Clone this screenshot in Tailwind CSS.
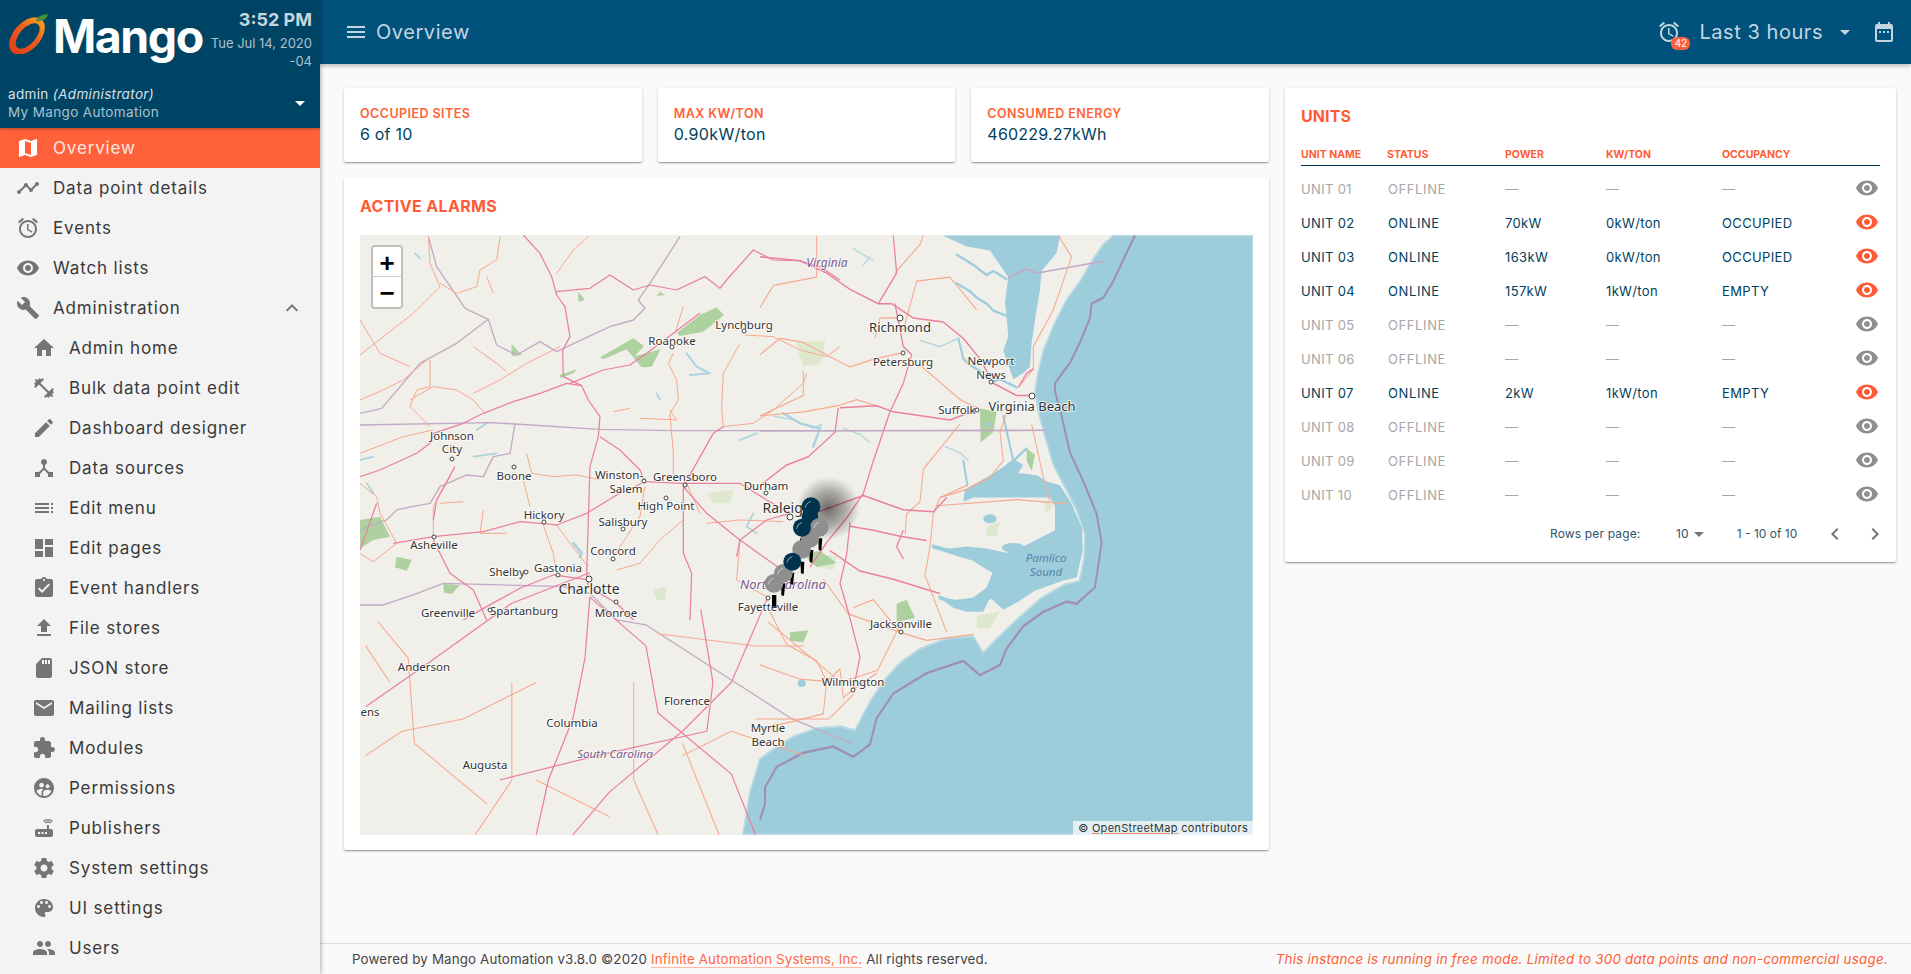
<!doctype html>
<html lang="en">
<head>
<meta charset="utf-8">
<title>Overview</title>
<script src="https://cdn.jsdelivr.net/npm/@tailwindcss/browser@4"></script>
</head>
<body class="[font-family:Inter,sans-serif] bg-[#fafafa] overflow-hidden">
<svg width="0" height="0" class="absolute">
  <defs>
    <symbol id="eye" viewBox="0 0 24 24"><path fill="currentColor" d="M12 4.5C7 4.5 2.73 7.61 1 12c1.73 4.39 6 7.5 11 7.5s9.27-3.11 11-7.5c-1.73-4.39-6-7.5-11-7.5zM12 17c-2.76 0-5-2.24-5-5s2.24-5 5-5 5 2.24 5 5-2.24 5-5 5zm0-8c-1.66 0-3 1.34-3 3s1.34 3 3 3 3-1.34 3-3-1.34-3-3-3z"/></symbol>
    <symbol id="alarm" viewBox="0 0 24 24"><path fill="currentColor" d="M22 5.72l-4.6-3.86-1.29 1.53 4.6 3.86L22 5.72zM7.88 3.39L6.6 1.86 2 5.71l1.29 1.53 4.59-3.85zM12.5 8H11v6l4.75 2.85.75-1.23-4-2.37V8zM12 4c-4.97 0-9 4.03-9 9s4.03 9 9 9 9-4.03 9-9-4.03-9-9-9zm0 16c-3.87 0-7-3.13-7-7s3.13-7 7-7 7 3.13 7 7-3.13 7-7 7z"/></symbol>
    <symbol id="drop" viewBox="0 0 24 24"><path fill="currentColor" d="M7 10l5 5 5-5z"/></symbol>
    <radialGradient id="halo"><stop offset="0" stop-color="#000" stop-opacity=".55"/><stop offset=".55" stop-color="#000" stop-opacity=".28"/><stop offset="1" stop-color="#000" stop-opacity="0"/></radialGradient>
    <linearGradient id="swirlB" x1="0" y1=".5" x2="1" y2=".5"><stop offset="0" stop-color="#e43d17"/><stop offset=".55" stop-color="#ef5a1c"/><stop offset="1" stop-color="#f9a11f"/></linearGradient>
  </defs>
</svg>
<div class="flex w-[1911px] h-[974px] overflow-hidden">
  <!-- Sidebar -->
  <aside class="w-[320px] shrink-0 h-full bg-[#f3f3f3] shadow-[1px_0_4px_rgba(0,0,0,0.3)] z-20 flex flex-col overflow-hidden">
    <header class="h-[128px] shrink-0 bg-[#004465] flex flex-col shadow-[0_1px_3px_rgba(0,0,0,0.3)] z-10">
      <div class="h-[80px] flex items-start">
        <svg class="ml-[9px] mt-[14px] w-[40px] h-[40px] shrink-0" viewBox="0 0 40 40">
          <g transform="rotate(-48 18 22)"><path fill="url(#swirlB)" fill-rule="evenodd" d="M-4 22a22 13.500 0 1 0 44 0a22 13.500 0 1 0-44 0ZM3 22.500a15.500 8 0 1 0 31 0a15.500 8 0 1 0-31 0Z"/></g>
          <path fill="#4e8f3c" d="M27 7C28 2 33 1 39 0C38 5 33 8 27 7Z"/>
        </svg>
        <span class="ml-[4px] mt-[8px] text-[46.5px] leading-[56px] font-bold text-white tracking-[-1.5px]">Mango</span>
        <div class="ml-auto pr-2 pt-[9px] text-right text-[#a9c2cf] whitespace-nowrap">
          <div class="text-[18px] leading-[22px] font-bold text-[#c5d6de]">3:52 PM</div>
          <div class="text-[13px] leading-[18px] mt-[3px]">Tue Jul 14, 2020</div>
          <div class="text-[13px] leading-[18px]">-04</div>
        </div>
      </div>
      <div class="flex items-center pl-2 pr-[8px] pt-[5px]">
        <div class="flex-1">
          <div class="text-[13.5px] leading-[18px] text-[#d5e1e7] tracking-[0.35px]">admin <em class="italic">(Administrator)</em></div>
          <div class="text-[13.5px] leading-[18px] text-[#a9c2cf] tracking-[0.35px]">My Mango Automation</div>
        </div>
        <svg class="w-6 h-6 text-white"><use href="#drop"/></svg>
      </div>
    </header>
    <nav class="text-[17px] text-[#3a3a3a] tracking-[0.85px] [&_span]:pt-[2px]">
      <a class="flex items-center h-[40px] bg-[#ff623a] text-[#fde8e0] pl-[16px]"><svg class="w-6 h-6 text-white shrink-0" viewBox="0 0 24 24"><path fill="currentColor" d="M20.5 3l-.16.03L15 5.1 9 3 3.36 4.9c-.21.07-.36.25-.36.48V20.5c0 .28.22.5.5.5l.16-.03L9 18.9l6 2.1 5.64-1.9c.21-.07.36-.25.36-.48V3.5c0-.28-.22-.5-.5-.5zM15 19l-6-2.11V5l6 2.11V19z"/></svg><span class="ml-[13px]">Overview</span></a>
      <a class="flex items-center h-[40px] pl-[16px]"><svg class="w-6 h-6 text-[#757575] shrink-0" viewBox="0 0 24 24"><path fill="currentColor" d="M23 8c0 1.100-.9 2-2 2-.18 0-.35-.02-.51-.07l-3.560 3.550c.05.16.07.34.07.52 0 1.100-.9 2-2 2s-2-.9-2-2c0-.18.02-.36.07-.52l-2.550-2.550c-.16.05-.34.07-.52.07s-.36-.02-.52-.07l-4.550 4.560c.05.16.07.33.07.51 0 1.100-.9 2-2 2s-2-.9-2-2 .9-2 2-2c.18 0 .35.02.51.07l4.560-4.550C8.020 9.360 8 9.180 8 9c0-1.100.9-2 2-2s2 .9 2 2c0 .18-.02.36-.07.52l2.550 2.550c.16-.05.34-.07.52-.07s.36.02.52.07l3.550-3.560C19.020 8.350 19 8.180 19 8c0-1.100.9-2 2-2s2 .9 2 2z"/></svg><span class="ml-[13px]">Data point details</span></a>
      <a class="flex items-center h-[40px] pl-[16px]"><svg class="w-6 h-6 text-[#757575] shrink-0"><use href="#alarm"/></svg><span class="ml-[13px]">Events</span></a>
      <a class="flex items-center h-[40px] pl-[16px]"><svg class="w-6 h-6 text-[#757575] shrink-0"><use href="#eye"/></svg><span class="ml-[13px]">Watch lists</span></a>
      <a class="flex items-center h-[40px] pl-[16px] pr-[16px]"><svg class="w-6 h-6 text-[#757575] shrink-0" viewBox="0 0 24 24"><path fill="currentColor" d="M22.700 19l-9.100-9.100c.9-2.300.4-5-1.500-6.900-2-2-5-2.400-7.400-1.300L9 6 6 9 1.600 4.700C.4 7.100.9 10.100 2.900 12.100c1.900 1.900 4.600 2.400 6.900 1.500l9.100 9.100c.4.4 1 .4 1.400 0l2.300-2.300c.5-.4.5-1.100.1-1.400z"/></svg><span class="ml-[13px] flex-1">Administration</span><svg class="w-6 h-6 text-[#757575] shrink-0" viewBox="0 0 24 24"><path fill="currentColor" d="M12 8l-6 6 1.410 1.410L12 10.830l4.590 4.580L18 14z"/></svg></a>
      <a class="flex items-center h-[40px] pl-[32px]"><svg class="w-6 h-6 text-[#757575] shrink-0" viewBox="0 0 24 24"><path fill="currentColor" d="M10 20v-6h4v6h5v-8h3L12 3 2 12h3v8z"/></svg><span class="ml-[13px]">Admin home</span></a>
      <a class="flex items-center h-[40px] pl-[32px]"><svg class="w-6 h-6 text-[#757575] shrink-0" viewBox="0 0 24 24"><path fill="currentColor" d="M20.570 14.860L22 13.430 20.570 12 17 15.570 8.430 7 12 3.430 10.570 2 9.140 3.430 7.710 2 5.570 4.140 4.140 2.710 2.710 4.140l1.430 1.430L2 7.710l1.430 1.430L2 10.570 3.430 12 7 8.430 15.570 17 12 20.570 13.430 22l1.430-1.430L16.290 22l2.140-2.140 1.430 1.430 1.430-1.430-1.430-1.430L22 16.290z"/></svg><span class="ml-[13px]">Bulk data point edit</span></a>
      <a class="flex items-center h-[40px] pl-[32px]"><svg class="w-6 h-6 text-[#757575] shrink-0" viewBox="0 0 24 24"><path fill="currentColor" d="M3 17.250V21h3.750L17.810 9.940l-3.750-3.750L3 17.250zM20.710 7.040c.39-.39.39-1.020 0-1.410l-2.340-2.340c-.39-.39-1.020-.39-1.410 0l-1.830 1.830 3.750 3.750 1.830-1.830z"/></svg><span class="ml-[13px]">Dashboard designer</span></a>
      <a class="flex items-center h-[40px] pl-[32px]"><svg class="w-6 h-6 text-[#757575] shrink-0" viewBox="0 0 24 24"><path fill="currentColor" d="M17 16l-4-4V8.820C14.160 8.400 15 7.300 15 6c0-1.660-1.340-3-3-3S9 4.340 9 6c0 1.300.84 2.400 2 2.820V12l-4 4H3v5h5v-3.050l4-4.200 4 4.200V21h5v-5h-4z"/></svg><span class="ml-[13px]">Data sources</span></a>
      <a class="flex items-center h-[40px] pl-[32px]"><svg class="w-6 h-6 text-[#757575] shrink-0" viewBox="0 0 24 24"><path fill="currentColor" d="M3 9h14V7H3v2zm0 4h14v-2H3v2zm0 4h14v-2H3v2zm16 0h2v-2h-2v2zm0-10v2h2V7h-2zm0 6h2v-2h-2v2z"/></svg><span class="ml-[13px]">Edit menu</span></a>
      <a class="flex items-center h-[40px] pl-[32px]"><svg class="w-6 h-6 text-[#757575] shrink-0" viewBox="0 0 24 24"><path fill="currentColor" d="M3 13h8V3H3v10zm0 8h8v-6H3v6zm10 0h8V11h-8v10zm0-18v6h8V3h-8z"/></svg><span class="ml-[13px]">Edit pages</span></a>
      <a class="flex items-center h-[40px] pl-[32px]"><svg class="w-6 h-6 text-[#757575] shrink-0" viewBox="0 0 24 24"><path fill="currentColor" d="M19 3h-4.180C14.400 1.840 13.300 1 12 1c-1.300 0-2.400.84-2.820 2H5c-1.100 0-2 .9-2 2v14c0 1.100.9 2 2 2h14c1.100 0 2-.9 2-2V5c0-1.100-.9-2-2-2zm-7 0c.55 0 1 .45 1 1s-.45 1-1 1-1-.45-1-1 .45-1 1-1zm-2 14l-4-4 1.410-1.410L10 14.170l6.590-6.590L18 9l-8 8z"/></svg><span class="ml-[13px]">Event handlers</span></a>
      <a class="flex items-center h-[40px] pl-[32px]"><svg class="w-6 h-6 text-[#757575] shrink-0" viewBox="0 0 24 24"><path fill="currentColor" d="M9 16h6v-6h4l-7-7-7 7h4zm-4 2h14v2H5z"/></svg><span class="ml-[13px]">File stores</span></a>
      <a class="flex items-center h-[40px] pl-[32px]"><svg class="w-6 h-6 text-[#757575] shrink-0" viewBox="0 0 24 24"><path fill="currentColor" d="M18 2h-8L4.020 8 4 20c0 1.100.9 2 2 2h12c1.100 0 2-.9 2-2V4c0-1.100-.9-2-2-2zm-6 6h-2V4h2v4zm3 0h-2V4h2v4zm3 0h-2V4h2v4z"/></svg><span class="ml-[13px]">JSON store</span></a>
      <a class="flex items-center h-[40px] pl-[32px]"><svg class="w-6 h-6 text-[#757575] shrink-0" viewBox="0 0 24 24"><path fill="currentColor" d="M20 4H4c-1.100 0-1.990.9-1.990 2L2 18c0 1.100.9 2 2 2h16c1.100 0 2-.9 2-2V6c0-1.100-.9-2-2-2zm0 4l-8 5-8-5V6l8 5 8-5v2z"/></svg><span class="ml-[13px]">Mailing lists</span></a>
      <a class="flex items-center h-[40px] pl-[32px]"><svg class="w-6 h-6 text-[#757575] shrink-0" viewBox="0 0 24 24"><path fill="currentColor" d="M20.500 11H19V7c0-1.100-.9-2-2-2h-4V3.500C13 2.120 11.880 1 10.500 1S8 2.120 8 3.500V5H4c-1.100 0-1.990.9-1.990 2v3.800H3.500c1.490 0 2.700 1.210 2.700 2.700s-1.210 2.700-2.700 2.700H2V20c0 1.100.9 2 2 2h3.800v-1.500c0-1.490 1.210-2.700 2.700-2.700 1.490 0 2.700 1.210 2.700 2.700V22H17c1.100 0 2-.9 2-2v-4h1.500c1.380 0 2.500-1.120 2.500-2.500S21.880 11 20.500 11z"/></svg><span class="ml-[13px]">Modules</span></a>
      <a class="flex items-center h-[40px] pl-[32px]"><svg class="w-6 h-6 text-[#757575] shrink-0" viewBox="0 0 24 24"><path fill="currentColor" d="M11.990 2c-5.520 0-10 4.480-10 10s4.480 10 10 10 10-4.480 10-10-4.480-10-10-10zm3.610 6.340c1.070 0 1.930.86 1.930 1.930 0 1.070-.86 1.930-1.930 1.930-1.070 0-1.930-.86-1.930-1.930-.01-1.070.86-1.930 1.930-1.930zm-6-1.580c1.300 0 2.360 1.060 2.360 2.360 0 1.300-1.060 2.360-2.360 2.360s-2.360-1.060-2.360-2.360c0-1.310 1.050-2.360 2.360-2.360zm0 9.130v3.750c-2.400-.75-4.300-2.600-5.140-4.960 1.050-1.120 3.670-1.690 5.140-1.690.53 0 1.200.08 1.900.22-1.640.87-1.900 2.020-1.900 2.680zM11.990 20c-.27 0-.53-.01-.79-.04v-4.070c0-1.420 2.940-2.130 4.400-2.130 1.070 0 2.920.39 3.840 1.150-1.170 2.970-4.060 5.090-7.450 5.090z"/></svg><span class="ml-[13px]">Permissions</span></a>
      <a class="flex items-center h-[40px] pl-[32px]"><svg class="w-6 h-6 text-[#757575] shrink-0" viewBox="0 0 24 24"><path fill="currentColor" d="M20.200 5.900l.8-.8C19.600 3.700 17.800 3 16 3s-3.600.7-5 2.100l.8.8C13 4.800 14.500 4.200 16 4.200s3 .6 4.200 1.700zm-.9.8c-.9-.9-2.100-1.400-3.300-1.400s-2.400.5-3.300 1.400l.8.8c.7-.7 1.600-1 2.500-1 .9 0 1.800.3 2.500 1l.8-.8zM19 13h-2V9h-2v4H5c-1.100 0-2 .9-2 2v4c0 1.100.9 2 2 2h14c1.100 0 2-.9 2-2v-4c0-1.100-.9-2-2-2zM8 18H6v-2h2v2zm3.500 0h-2v-2h2v2zm3.500 0h-2v-2h2v2z"/></svg><span class="ml-[13px]">Publishers</span></a>
      <a class="flex items-center h-[40px] pl-[32px]"><svg class="w-6 h-6 text-[#757575] shrink-0" viewBox="0 0 24 24"><path fill="currentColor" d="M19.430 12.980c.04-.32.07-.64.07-.98s-.03-.66-.07-.98l2.110-1.650c.19-.15.24-.42.12-.64l-2-3.460c-.12-.22-.39-.3-.61-.22l-2.490 1c-.52-.4-1.080-.73-1.690-.98l-.38-2.650C14.460 2.180 14.250 2 14 2h-4c-.25 0-.46.18-.49.42l-.38 2.650c-.61.25-1.170.59-1.690.98l-2.490-1c-.23-.09-.49 0-.61.22l-2 3.460c-.13.22-.07.49.12.64l2.110 1.650c-.04.32-.07.65-.07.98s.03.66.07.98l-2.110 1.650c-.19.15-.24.42-.12.64l2 3.460c.12.22.39.3.61.22l2.490-1c.52.4 1.080.73 1.690.98l.38 2.650c.03.24.24.42.49.42h4c.25 0 .46-.18.49-.42l.38-2.650c.61-.25 1.170-.59 1.690-.98l2.490 1c.23.09.49 0 .61-.22l2-3.460c.12-.22.07-.49-.12-.64l-2.110-1.650zM12 15.500c-1.930 0-3.500-1.570-3.500-3.500s1.570-3.500 3.500-3.500 3.500 1.570 3.500 3.500-1.570 3.500-3.500 3.500z"/></svg><span class="ml-[13px]">System settings</span></a>
      <a class="flex items-center h-[40px] pl-[32px]"><svg class="w-6 h-6 text-[#757575] shrink-0" viewBox="0 0 24 24"><path fill="currentColor" d="M12 3c-4.970 0-9 4.030-9 9s4.030 9 9 9c.83 0 1.500-.67 1.500-1.500 0-.39-.15-.74-.39-1.010-.23-.26-.38-.61-.38-.99 0-.83.67-1.500 1.500-1.500H16c2.760 0 5-2.240 5-5 0-4.420-4.030-8-9-8zm-5.500 9c-.83 0-1.500-.67-1.500-1.500S5.670 9 6.500 9 8 9.670 8 10.500 7.330 12 6.500 12zm3-4C8.670 8 8 7.330 8 6.500S8.670 5 9.500 5s1.500.67 1.500 1.500S10.330 8 9.500 8zm5 0c-.83 0-1.500-.67-1.500-1.500S13.670 5 14.500 5s1.500.67 1.500 1.500S15.330 8 14.500 8zm3 4c-.83 0-1.500-.67-1.500-1.500S16.670 9 17.500 9s1.500.67 1.500 1.500-.67 1.500-1.500 1.500z"/></svg><span class="ml-[13px]">UI settings</span></a>
      <a class="flex items-center h-[40px] pl-[32px]"><svg class="w-6 h-6 text-[#757575] shrink-0" viewBox="0 0 24 24"><path fill="currentColor" d="M16 11c1.660 0 2.990-1.340 2.990-3S17.660 5 16 5c-1.660 0-3 1.340-3 3s1.340 3 3 3zm-8 0c1.660 0 2.990-1.340 2.990-3S9.660 5 8 5C6.340 5 5 6.340 5 8s1.340 3 3 3zm0 2c-2.330 0-7 1.170-7 3.500V19h14v-2.500c0-2.330-4.670-3.500-7-3.500zm8 0c-.29 0-.62.02-.97.05 1.160.84 1.970 1.970 1.970 3.450V19h6v-2.500c0-2.330-4.670-3.500-7-3.500z"/></svg><span class="ml-[13px]">Users</span></a>
    </nav>
  </aside>

  <!-- Main -->
  <div class="flex-1 min-w-0 flex flex-col h-full">
    <div class="h-16 shrink-0 bg-[#00527d] shadow-[0_2px_4px_rgba(0,0,0,0.25)] z-10 flex items-center text-[#c3d6e0] pl-[24px] pr-[15px]">
      <svg class="w-6 h-6" viewBox="0 0 24 24"><path fill="currentColor" d="M3 18h18v-2H3v2zm0-5h18v-2H3v2zm0-7v2h18V6H3z"/></svg>
      <span class="ml-[8px] text-[20px] tracking-[0.55px]">Overview</span>
      <div class="ml-auto relative w-6 h-6 mr-[18px]">
        <svg class="w-6 h-6"><use href="#alarm"/></svg>
        <span class="absolute left-[14px] top-[17px] w-[19px] h-[13px] rounded-[6px] bg-[#ff623a] text-white text-[10px] leading-[13px] text-center">42</span>
      </div>
      <span class="text-[20px] tracking-[0.55px]">Last 3 hours</span>
      <svg class="w-6 h-6 ml-[10px]"><use href="#drop"/></svg>
      <svg class="w-6 h-6 ml-[15px]" viewBox="0 0 24 24"><path fill="currentColor" d="M19 4h-1V2h-2v2H8V2H6v2H5c-1.110 0-1.990.9-1.990 2L3 20c0 1.100.89 2 2 2h14c1.100 0 2-.9 2-2V6c0-1.100-.9-2-2-2zm0 16H5V9h14v11zM9 11H7v2h2v-2zm4 0h-2v2h2v-2zm4 0h-2v2h2v-2z"/></svg>
    </div>

    <main class="flex-1 min-h-0 flex items-start gap-4 pl-[24px] pt-[24px]">
      <section class="w-[925px] flex flex-col gap-4">
        <div class="flex gap-4">
          <div class="flex-1 h-[74px] bg-white rounded-[2px] shadow-[0_1px_3px_rgba(0,0,0,0.2),0_1px_1px_rgba(0,0,0,0.14),0_2px_1px_-1px_rgba(0,0,0,0.12)] px-4 pt-[17px]">
            <div class="text-[12.5px] leading-[18px] font-semibold text-[#ff6237] tracking-[0.45px]">OCCUPIED SITES</div>
            <div class="text-[16px] leading-[24px] -mt-[1px] text-[#003f5c] tracking-[0.2px]">6 of 10</div>
          </div>
          <div class="flex-1 h-[74px] bg-white rounded-[2px] shadow-[0_1px_3px_rgba(0,0,0,0.2),0_1px_1px_rgba(0,0,0,0.14),0_2px_1px_-1px_rgba(0,0,0,0.12)] px-4 pt-[17px]">
            <div class="text-[12.5px] leading-[18px] font-semibold text-[#ff6237] tracking-[0.45px]">MAX KW/TON</div>
            <div class="text-[16px] leading-[24px] -mt-[1px] text-[#003f5c] tracking-[0.35px]">0.90kW/ton</div>
          </div>
          <div class="flex-1 h-[74px] bg-white rounded-[2px] shadow-[0_1px_3px_rgba(0,0,0,0.2),0_1px_1px_rgba(0,0,0,0.14),0_2px_1px_-1px_rgba(0,0,0,0.12)] px-4 pt-[17px]">
            <div class="text-[12.5px] leading-[18px] font-semibold text-[#ff6237] tracking-[0.45px]">CONSUMED ENERGY</div>
            <div class="text-[16px] leading-[24px] -mt-[1px] text-[#003f5c] tracking-[0.2px]">460229.27kWh</div>
          </div>
        </div>
        <div class="h-[672px] bg-white rounded-[2px] shadow-[0_1px_3px_rgba(0,0,0,0.2),0_1px_1px_rgba(0,0,0,0.14),0_2px_1px_-1px_rgba(0,0,0,0.12)] px-4 pt-[17px]">
          <h2 class="text-[16px] leading-[22px] font-bold text-[#ff5c35] tracking-[0.35px]">ACTIVE ALARMS</h2>
          <div class="relative mt-[18px] w-[893px] h-[600px] overflow-hidden bg-[#f1efe9]">
            <svg class="block" width="893" height="600" viewBox="360 235 893 600" font-family="Noto Sans">
              <rect x="360" y="235" width="893" height="600" fill="#f1efe9"/>
              <!-- green areas, zoom-11 space -->
              <g transform="translate(340 220) scale(.3333)" fill="#aed1a0">
                <path d="M1010 340L1080 285L1130 262L1152 285L1090 335L1020 348Z"/>
                <path d="M780 412L880 355L912 378L885 408L962 388L935 440L905 442L860 388L790 418Z"/>
                <path d="M60 900L120 890L150 950L100 960L60 985Z"/>
                <path d="M310 1092L360 1095L335 1122L312 1118Z"/>
                <path d="M170 1010L215 1020L200 1052L165 1042Z"/>
                <path d="M515 372L545 405L515 408Z"/>
                <path d="M660 465L710 448L700 460L660 475ZM715 215L735 240L715 245Z"/>
                <path d="M960 215L975 225L950 228Z"/>
              </g>
              <g transform="translate(340 220) scale(.3333)" fill="#dde8cd">
                <path d="M1370 360L1450 380L1440 430L1390 440Z"/>
                <path d="M1100 820L1180 810L1170 850L1120 850Z"/>
                <path d="M1420 1000L1490 1010L1480 1050L1430 1040Z"/>
                <path d="M940 1110L980 1100L975 1140L950 1140Z"/>
              </g>
              <!-- water, zoom-12 space -->
              <g transform="translate(760 220) scale(.3333 .4082)">
                <path fill="#add19e" d="M660 462L710 470L700 520L662 545ZM410 940L440 930L465 975L410 985ZM90 1010L145 1005L130 1035L90 1030ZM130 820L180 810L230 840L170 850ZM800 560L825 575L815 615L800 590Z"/>
                <path fill="#dde8cd" d="M110 300L195 295L190 340L120 340ZM650 970L720 960L690 1000L650 1000ZM850 685L880 700L860 720ZM680 750L720 740L710 775L680 775Z"/>
                <path fill="#9dcddb" stroke="#b7dae4" stroke-width="5" d="M1060 38L1030 60L1000 95L960 150L920 195L880 260L850 320L835 370L825 420L835 470L855 530L880 600L912 650L950 710L975 770L972 830L958 885L915 892L845 925L775 975L705 1030L670 1060L640 1020L560 1025L480 1050L420 1085L370 1130L330 1180L285 1250L240 1240L170 1245L100 1265L50 1290L0 1320L-30 1400L-51 1505L1479 1505L1479 38Z"/>
                <path fill="#9dcddb" d="M548 38L620 65L690 75L720 110L745 140L735 200L745 285L730 320L760 390L790 375L810 360L815 300L830 220L840 170L845 125L890 80L900 38Z"/>
                <path fill="#9dcddb" d="M900 650L935 695L966 755L968 810L950 876L908 884L825 908L775 935L730 955L690 925L670 960L620 960L580 950L540 925L590 930L640 925L680 900L700 860L660 835L600 825L520 800L570 805L620 800L680 805L740 815L790 800L850 775L885 760L885 700L870 680L780 680L700 680L640 680L610 690L615 660L680 630L730 605L760 585L790 600L775 620L830 625L860 640Z"/>
                <g fill="none" stroke="#9dcddb" stroke-width="6" stroke-linecap="round" stroke-linejoin="round">
                  <path d="M740 145L700 125L680 135L640 110L590 85"/>
                  <path d="M740 235L700 222L680 205L650 190L630 175L590 155"/>
                  <path d="M770 410L720 390L700 395L660 370L630 355L610 340L595 290" />
                  <path d="M730 480L760 590L800 560"/>
                  <path d="M610 590L622 650"/>
                  <path d="M520 800L640 830L700 860" stroke-width="10"/>
                  <path d="M540 925L620 950L690 925" stroke-width="10"/>
                </g>
                <g fill="none" stroke="#aad3df" stroke-width="3" stroke-linecap="round">
                  <path d="M595 290L540 310L480 295"/>
                  <path d="M555 555L600 570L625 590"/>
                  <path d="M40 480L100 490L160 510L185 500L160 550"/>
                  <path d="M250 510L300 525L330 545"/>
                  <path d="M280 70L340 100M330 90L310 110"/>
                </g>
                <ellipse cx="690" cy="732" rx="20" ry="11" fill="#9dcddb"/>
                <ellipse cx="760" cy="803" rx="34" ry="12" fill="#9dcddb"/>
                <ellipse cx="683" cy="500" rx="9" ry="6" fill="#9dcddb"/>
                <ellipse cx="125" cy="1135" rx="12" ry="9" fill="#9dcddb"/>
              </g>
              <g transform="translate(340 220) scale(.3333)" fill="none" stroke="#aad3df" stroke-width="4" stroke-linecap="round" stroke-linejoin="round">
                <path d="M1040 400L1070 440L1110 460L1050 465" stroke-width="6"/>
                <path d="M1330 580L1380 610L1440 625L1420 680" stroke-width="7"/>
                <path d="M400 710L470 700M410 630L440 610" stroke-width="5"/>
                <path d="M700 970L725 1000L720 1010" stroke-width="9"/>
                <path d="M1240 880L1220 920L1250 940M1200 660L1250 640" stroke-width="5"/>
                <path d="M225 100L240 115M960 540L950 520M60 720L100 710M80 790L100 820" stroke-width="5"/>
              </g>
              <!-- administrative borders -->
              <g transform="translate(340 220) scale(.3333)" fill="none" stroke="#c2aac6" stroke-width="4" stroke-linejoin="round">
                <path d="M60 615L450 608L525 612L780 628L1000 632L1500 632"/>
                <path d="M525 612L510 700L460 710L430 770L380 765L300 800L270 850L215 860L170 870L140 900L60 930"/>
                <path d="M265 50L290 140L345 220L375 265L445 298L470 375L530 405L600 365L650 395L745 350L810 320L880 300L915 265L895 240L930 190L1020 50"/>
                <path d="M60 580L125 565L240 430L350 370L445 298"/>
                <path d="M60 1155L130 1155L220 1125L310 1090L670 1100L750 1120L830 1200L918 1215L1356 1497L1539 1572"/>
              </g>
              <g transform="translate(760 220) scale(.3333 .4082)" fill="none" stroke="#c2aac6" stroke-width="4">
                <path d="M0 517L865 515"/>
                <path d="M745 140L800 120L830 130L900 120L1035 100"/>
              </g>
              <path transform="translate(760 220) scale(.3333 .4082)" fill="none" stroke="#a08fb4" stroke-width="6" stroke-linejoin="round" d="M1125 38L1100 80L1060 150L1030 190L995 205L990 240L960 300L930 350L885 400L885 420L905 480L930 570L970 640L1010 720L1025 790L1005 900L950 940L920 935L850 960L790 995L740 1050L720 1090L660 1115L610 1080L500 1110L400 1160L350 1220L330 1285L280 1315L220 1290L130 1305L50 1340L15 1390L15 1430L0 1470"/>
              <!-- orange roads -->
              <g transform="translate(340 220) scale(.3333)" fill="none" stroke="#f7a88c" stroke-width="3" stroke-linejoin="round">
                <path d="M60 300L120 400L210 440M60 405L130 350L220 280L300 200L270 130L265 50"/>
                <path d="M1200 370L1150 460L1145 560L1150 620L1120 640L1075 720L1030 800"/>
                <path d="M1215 345L1300 350L1380 390L1460 410L1500 380"/>
                <path d="M990 570L1010 600L900 595M1150 620L1240 610L1300 570L1390 490L1400 460"/>
                <path d="M1000 400L985 430L1010 480L1015 540L990 580L1000 700L1000 780"/>
                <path d="M270 420L270 500L230 510L210 560L270 620M60 540L130 510L190 480L260 420"/>
                <path d="M400 520L480 480L560 430L660 380M400 380L470 430L500 455"/>
                <path d="M480 50L470 120L420 150L410 200L350 220L300 190M745 50L700 90L650 160"/>
                <path d="M210 540L280 500L350 510L400 540L435 580M280 640L270 670M60 700L190 650L280 630"/>
                <path d="M560 700L575 760L640 770L710 765L780 780M550 780L570 860"/>
                <path d="M1030 260L1005 340M440 170L460 220M820 575L870 565"/>
                <path d="M300 850L370 845M430 870L420 940L500 940M280 950L280 860L330 770"/>
                <path d="M610 915L640 1000L650 1060M650 915L690 970L745 1040"/>
                <path d="M60 1000L100 1025L170 970L120 880L110 830L60 790"/>
                <path d="M820 1010L860 950L900 890L915 800"/>
                <path d="M1030 900L960 960L900 1030L830 1050M1100 910L1200 900L1330 905"/>
                <path d="M1200 960L1190 1080L1280 1130M1040 790L1080 880"/>
              </g>
              <g transform="translate(760 220) scale(.3333 .4082)" fill="none" stroke="#f7a88c" stroke-width="3" stroke-linejoin="round">
                <path d="M0 215L40 160L170 140L170 38M0 330L60 290L130 300L210 335L270 360L345 340L430 325"/>
                <path d="M430 270L470 150L570 140L650 220M490 38L480 60L405 130M420 240L360 240L345 290"/>
                <path d="M480 355L600 440L650 460M130 370L130 430L0 480"/>
                <path d="M0 480L130 470L235 455L290 440L350 455"/>
                <path d="M745 460L720 520L730 590L690 630L620 660L540 680L520 720L510 800L495 870L560 1010"/>
                <path d="M600 500L490 610L480 690L440 720L435 770M815 500L850 630L870 690M895 38L935 90L880 220L820 310L820 365L775 410"/>
                <path d="M265 965L350 990L420 1010L500 1030L640 1015M420 1010L340 930L280 950"/>
                <path d="M0 1090L120 1125L200 1130L240 1100L250 1170L280 1150L350 1110"/>
                <path d="M200 1130L190 1210L90 1230L0 1245"/>
                <path d="M30 960L80 1040L170 1080L200 1130M265 965L190 880"/>
                <path d="M540 680L620 650M530 700L770 685L920 695"/>
              </g>
              <g transform="scale(1.2187)" fill="none" stroke="#f7a88c" stroke-width=".85" stroke-linejoin="round">
                <path d="M310 510L335 540L340 610L400 660M540 520L620 530L660 530"/>
                <path d="M630 510L690 560L720 550L740 510M660 620L600 600L560 620M620 590L680 590L700 570"/>
                <path d="M300 620L330 600L380 590L440 560M420 560L420 640L390 685M520 560L520 640L540 685"/>
                <path d="M560 610L590 685M440 640L500 670M300 530L320 560"/>
              </g>
              <!-- motorways -->
              <g transform="translate(340 220) scale(.3333)" fill="none" stroke="#ea7f9e" stroke-width="3.700" stroke-linejoin="round">
                <path d="M550 45L600 100L635 170L650 225L675 260L690 350L668 390L670 470L725 497L745 540L780 590L775 650L750 740L745 900L740 1060L745 1100"/>
                <path d="M650 215L750 205L810 165L880 210L930 195L1010 210L1095 170L1140 205L1160 180L1240 90L1300 120L1375 122L1440 140L1500 180"/>
                <path d="M725 497L680 490L600 520L520 545L430 580L370 610L280 640L270 670L230 700L120 750L60 770"/>
                <path d="M780 650L840 690L900 750L915 785L1030 790L1200 790L1280 840L1350 880"/>
                <path d="M160 970L280 950L430 935L540 905L650 915L740 880L830 825L905 790"/>
                <path d="M745 1080L640 1065L540 1105L440 1160L370 1200"/>
                <path d="M60 990L110 850M280 960L330 1060L400 1110L440 1200M280 900L290 840L345 740"/>
                <path d="M1030 800L1030 1000L1055 1060L1050 1200"/>
                <path d="M745 1100L830 1150L880 1200"/>
                <path d="M1030 800L1100 880L1200 960L1340 1060M1350 880L1280 900L1200 960L1190 1010"/>
                <path d="M690 490L790 450L870 435L920 400L1000 340L1080 280"/>
                <path d="M1150 620L1120 640L1075 720L1030 800"/>
              </g>
              <g transform="translate(760 220) scale(.3333 .4082)" fill="none" stroke="#ea7f9e" stroke-width="3.700" stroke-linejoin="round">
                <path d="M0 90L120 100L200 130L270 170L355 205L395 205L460 240L550 250L610 290L660 340L700 400L770 430L815 430"/>
                <path d="M400 38L410 130L355 205M405 205L430 310L455 330L430 400L390 470L340 590L310 670L260 730L200 790L150 850"/>
                <path d="M175 715L310 675L430 710L520 715L560 680"/>
                <path d="M270 740L260 820L240 890L265 960L300 1070L280 1150"/>
                <path d="M210 810L300 860L400 880L500 905L540 915"/>
                <path d="M240 460L350 455L400 470L570 490L650 465"/>
                <path d="M235 460L225 520L145 580L80 600L0 650"/>
                <path d="M270 750L340 760L420 775L500 785M430 760L410 800L430 830"/>
                <path d="M775 410L800 375L820 365"/>
              </g>
              <g transform="scale(1.2187)" fill="none" stroke="#ea7f9e" stroke-width="1" stroke-linejoin="round">
                <path d="M484 490L480 540L470 590L450 640L440 685"/>
                <path d="M484 490L530 530L540 585L600 635L620 685"/>
                <path d="M484 470L420 495L350 545L300 580"/>
                <path d="M575 500L585 560L580 600L490 620L410 640"/>
                <path d="M630 490L600 560L560 600L500 650L470 685"/>
              </g>
              <!-- labels -->
              <g fill="#333" font-size="11.500" text-anchor="middle" stroke="#fff" stroke-opacity=".75" stroke-width="2" paint-order="stroke" stroke-linejoin="round">
                <text x="744" y="329">Lynchburg</text><text x="672" y="345">Roanoke</text>
                <text x="452" y="440">Johnson</text><text x="452" y="453">City</text><text x="514" y="480">Boone</text>
                <text x="619" y="479">Winston-</text><text x="626" y="493">Salem</text><text x="685" y="481">Greensboro</text>
                <text x="766" y="490">Durham</text><text x="666" y="510">High Point</text><text x="544" y="519">Hickory</text>
                <text x="623" y="526">Salisbury</text><text x="613" y="555">Concord</text><text x="434" y="549">Asheville</text>
                <text x="507" y="576">Shelby</text><text x="558" y="572">Gastonia</text><text x="448" y="617">Greenville</text>
                <text x="524" y="615">Spartanburg</text><text x="616" y="617">Monroe</text><text x="768" y="611">Fayetteville</text>
                <text x="903" y="366">Petersburg</text><text x="991" y="365">Newport</text><text x="991" y="379">News</text>
                <text x="957" y="414">Suffolk</text><text x="901" y="628">Jacksonville</text><text x="853" y="686">Wilmington</text>
                <text x="768" y="732">Myrtle</text><text x="768" y="746">Beach</text><text x="687" y="705">Florence</text>
                <text x="572" y="727">Columbia</text><text x="424" y="671">Anderson</text><text x="485" y="769">Augusta</text>
                <text x="370" y="716">ens</text>
                <text x="787" y="513" font-size="14">Raleigh</text><text x="589" y="594" font-size="14">Charlotte</text>
                <text x="900" y="332" font-size="13">Richmond</text><text x="1032" y="411" font-size="13">Virginia Beach</text>
              </g>
              <g fill="#7a5a8c" font-size="12" font-style="italic" text-anchor="middle" stroke="#fff" stroke-opacity=".6" stroke-width="2" paint-order="stroke">
                <text x="827" y="267">Virginia</text><text x="783" y="589" font-size="13">North Carolina</text><text x="615" y="758" font-size="11.500">South Carolina</text>
              </g>
              <g fill="#5a82ab" font-size="11.500" font-style="italic" text-anchor="middle">
                <text x="1046" y="562">Pamlico</text><text x="1046" y="576">Sound</text>
              </g>
              <g fill="#fff" stroke="#444" stroke-width="1">
                <circle cx="744" cy="331" r="2"/><circle cx="672" cy="347" r="2"/><circle cx="452" cy="459" r="2"/><circle cx="514" cy="467" r="2"/><circle cx="644" cy="481" r="2"/><circle cx="685" cy="485" r="2"/><circle cx="766" cy="493" r="2"/><circle cx="666" cy="498" r="2"/><circle cx="790" cy="517" r="3"/><circle cx="544" cy="522" r="2"/><circle cx="623" cy="529" r="2"/><circle cx="613" cy="559" r="2"/><circle cx="434" cy="537" r="2"/><circle cx="526" cy="572" r="2"/><circle cx="558" cy="575" r="2"/><circle cx="589" cy="579" r="3"/><circle cx="490" cy="610" r="2"/><circle cx="616" cy="602" r="2"/><circle cx="768" cy="598" r="2"/><circle cx="900" cy="318" r="3"/><circle cx="903" cy="353" r="2"/><circle cx="991" cy="382" r="2"/><circle cx="977" cy="410" r="2"/><circle cx="1032" cy="396" r="3"/><circle cx="901" cy="632" r="2"/><circle cx="853" cy="690" r="2"/>
              </g>
              <!-- pins, zoom-8 space -->
              <g transform="translate(700 470) scale(.3333)">
                <circle cx="385" cy="115" r="95" fill="url(#halo)"/>
                <g fill="#000">
                  <path d="M355 205L367 205L364 242L356 240Z"/><path d="M328 240L340 240L337 278L329 276Z"/><path d="M301 275L313 275L311 312L303 310Z"/><path d="M271 308L283 308L279 344L271 342Z"/><path d="M244 340L256 340L252 378L244 376Z"/><path d="M216 375L229 375L229 410L216 410Z"/>
                  <rect x="300" y="205" width="6" height="14"/><rect x="300" y="225" width="6" height="7"/>
                </g>
                <circle cx="333" cy="110" r="28" fill="#00334d"/><circle cx="330" cy="140" r="25" fill="#00334d"/>
                <g fill="#8f8f8f">
                  <circle cx="358" cy="172" r="28"/><circle cx="330" cy="205" r="28"/><circle cx="305" cy="238" r="28"/><circle cx="250" cy="310" r="28"/><circle cx="222" cy="340" r="28"/>
                </g>
                <circle cx="306" cy="173" r="27" fill="#00334d"/><circle cx="277" cy="275" r="27" fill="#00334d"/>
                <g fill="none" stroke="#fff" stroke-opacity=".55" stroke-width="3" stroke-linecap="round">
                  <path d="M316 112Q318 98 332 95"/><path d="M290 175Q292 161 305 158"/><path d="M261 277Q263 263 276 260"/>
                  <path d="M233 312Q235 298 248 295"/><path d="M205 342Q207 328 220 325"/><path d="M342 172Q344 160 356 157"/>
                </g>
              </g>
            </svg>
            <!-- zoom control -->
            <div class="absolute left-[11px] top-[10px] w-[32px] rounded-[4px] border-2 border-black/20 bg-clip-padding [font-family:'Liberation_Sans',sans-serif]">
              <div class="h-[30px] bg-white rounded-t-[2px] border-b border-[#ccc] text-[#000] text-[26px] font-bold leading-[32px] text-center">+</div>
              <div class="h-[30px] bg-white rounded-b-[2px] text-[#000] text-[26px] font-bold leading-[32px] text-center">−</div>
            </div>
            <div class="absolute right-0 bottom-0 h-[14px] px-[5px] bg-white/70 text-[11px] leading-[14px] text-[#333] tracking-[0.3px]">© <span class="underline decoration-[#ff8a65]">OpenStreetMap</span> contributors</div>
          </div>
        </div>
      </section>

      <section class="w-[611px] h-[474px] bg-white rounded-[2px] shadow-[0_1px_3px_rgba(0,0,0,0.2),0_1px_1px_rgba(0,0,0,0.14),0_2px_1px_-1px_rgba(0,0,0,0.12)] pl-4 pr-4">
        <h2 class="pt-[17px] text-[16px] leading-[22px] font-bold text-[#ff5c35] tracking-[0.1px]">UNITS</h2>
        <div class="mt-[21px] flex h-[18px] items-start text-[10.500px] leading-[13px] font-bold text-[#ff5c35] border-b border-[#003a55]">
          <span class="w-[86px]">UNIT NAME</span><span class="w-[118px]">STATUS</span><span class="w-[101px]">POWER</span><span class="w-[116px]">KW/TON</span><span>OCCUPANCY</span>
        </div>
        <div class="pt-[7px] text-[13px] tracking-[0.35px]">
          <div class="flex items-center h-[34px] text-[#a6a6a6]"><span class="w-[87px]">UNIT 01</span><span class="w-[117px] tracking-[0.6px]">OFFLINE</span><span class="w-[101px]">—</span><span class="w-[116px]">—</span><span class="w-[118px]">—</span><svg class="w-6 h-6 text-[#8f8f8f] -mt-[5px] ml-[15px]"><use href="#eye"/></svg></div>
          <div class="flex items-center h-[34px] text-[#003f5c]"><span class="w-[87px]">UNIT 02</span><span class="w-[117px] tracking-[0.6px]">ONLINE</span><span class="w-[101px]">70kW</span><span class="w-[116px]">0kW/ton</span><span class="w-[118px]">OCCUPIED</span><svg class="w-6 h-6 text-[#ff5c35] -mt-[5px] ml-[15px]"><use href="#eye"/></svg></div>
          <div class="flex items-center h-[34px] text-[#003f5c]"><span class="w-[87px]">UNIT 03</span><span class="w-[117px] tracking-[0.6px]">ONLINE</span><span class="w-[101px]">163kW</span><span class="w-[116px]">0kW/ton</span><span class="w-[118px]">OCCUPIED</span><svg class="w-6 h-6 text-[#ff5c35] -mt-[5px] ml-[15px]"><use href="#eye"/></svg></div>
          <div class="flex items-center h-[34px] text-[#003f5c]"><span class="w-[87px]">UNIT 04</span><span class="w-[117px] tracking-[0.6px]">ONLINE</span><span class="w-[101px]">157kW</span><span class="w-[116px]">1kW/ton</span><span class="w-[118px]">EMPTY</span><svg class="w-6 h-6 text-[#ff5c35] -mt-[5px] ml-[15px]"><use href="#eye"/></svg></div>
          <div class="flex items-center h-[34px] text-[#a6a6a6]"><span class="w-[87px]">UNIT 05</span><span class="w-[117px] tracking-[0.6px]">OFFLINE</span><span class="w-[101px]">—</span><span class="w-[116px]">—</span><span class="w-[118px]">—</span><svg class="w-6 h-6 text-[#8f8f8f] -mt-[5px] ml-[15px]"><use href="#eye"/></svg></div>
          <div class="flex items-center h-[34px] text-[#a6a6a6]"><span class="w-[87px]">UNIT 06</span><span class="w-[117px] tracking-[0.6px]">OFFLINE</span><span class="w-[101px]">—</span><span class="w-[116px]">—</span><span class="w-[118px]">—</span><svg class="w-6 h-6 text-[#8f8f8f] -mt-[5px] ml-[15px]"><use href="#eye"/></svg></div>
          <div class="flex items-center h-[34px] text-[#003f5c]"><span class="w-[87px]">UNIT 07</span><span class="w-[117px] tracking-[0.6px]">ONLINE</span><span class="w-[101px]">2kW</span><span class="w-[116px]">1kW/ton</span><span class="w-[118px]">EMPTY</span><svg class="w-6 h-6 text-[#ff5c35] -mt-[5px] ml-[15px]"><use href="#eye"/></svg></div>
          <div class="flex items-center h-[34px] text-[#a6a6a6]"><span class="w-[87px]">UNIT 08</span><span class="w-[117px] tracking-[0.6px]">OFFLINE</span><span class="w-[101px]">—</span><span class="w-[116px]">—</span><span class="w-[118px]">—</span><svg class="w-6 h-6 text-[#8f8f8f] -mt-[5px] ml-[15px]"><use href="#eye"/></svg></div>
          <div class="flex items-center h-[34px] text-[#a6a6a6]"><span class="w-[87px]">UNIT 09</span><span class="w-[117px] tracking-[0.6px]">OFFLINE</span><span class="w-[101px]">—</span><span class="w-[116px]">—</span><span class="w-[118px]">—</span><svg class="w-6 h-6 text-[#8f8f8f] -mt-[5px] ml-[15px]"><use href="#eye"/></svg></div>
          <div class="flex items-center h-[34px] text-[#a6a6a6]"><span class="w-[87px]">UNIT 10</span><span class="w-[117px] tracking-[0.6px]">OFFLINE</span><span class="w-[101px]">—</span><span class="w-[116px]">—</span><span class="w-[118px]">—</span><svg class="w-6 h-6 text-[#8f8f8f] -mt-[5px] ml-[15px]"><use href="#eye"/></svg></div>
        </div>
        <div class="flex items-center h-[24px] mt-[9px] text-[12px] text-[#2f5468] tracking-[0.15px] pl-[249px]">
          <span class="w-[126px] shrink-0 whitespace-nowrap">Rows per page:</span><span class="shrink-0">10</span><svg class="w-6 h-6 -ml-[2px] shrink-0 text-[#757575]"><use href="#drop"/></svg><span class="ml-[26px] w-[58px] shrink-0 whitespace-nowrap tracking-normal">1 - 10 of 10</span>
          <svg class="w-6 h-6 shrink-0 text-[#757575] ml-[28px]" viewBox="0 0 24 24"><path fill="currentColor" d="M15.410 7.410L14 6l-6 6 6 6 1.410-1.410L10.830 12z"/></svg>
          <svg class="w-6 h-6 shrink-0 text-[#757575] ml-[16px]" viewBox="0 0 24 24"><path fill="currentColor" d="M10 6L8.590 7.410 13.170 12l-4.580 4.590L10 18l6-6z"/></svg>
        </div>
      </section>
    </main>

    <footer class="h-[31px] shrink-0 border-t border-[#ddd] flex items-center pt-[1px] pl-[32px] pr-[23px] text-[13.33px]">
      <span class="text-[#444] tracking-[0.15px]">Powered by Mango Automation v3.8.0 ©2020 <a class="text-[#ff6a45] border-b border-[#ffb9a6]">Infinite Automation Systems, Inc.</a> All rights reserved.</span>
      <em class="ml-auto italic text-[#ff5c35] tracking-[0.27px]">This instance is running in free mode. Limited to 300 data points and non-commercial usage.</em>
    </footer>
  </div>
</div>
</body>
</html>
